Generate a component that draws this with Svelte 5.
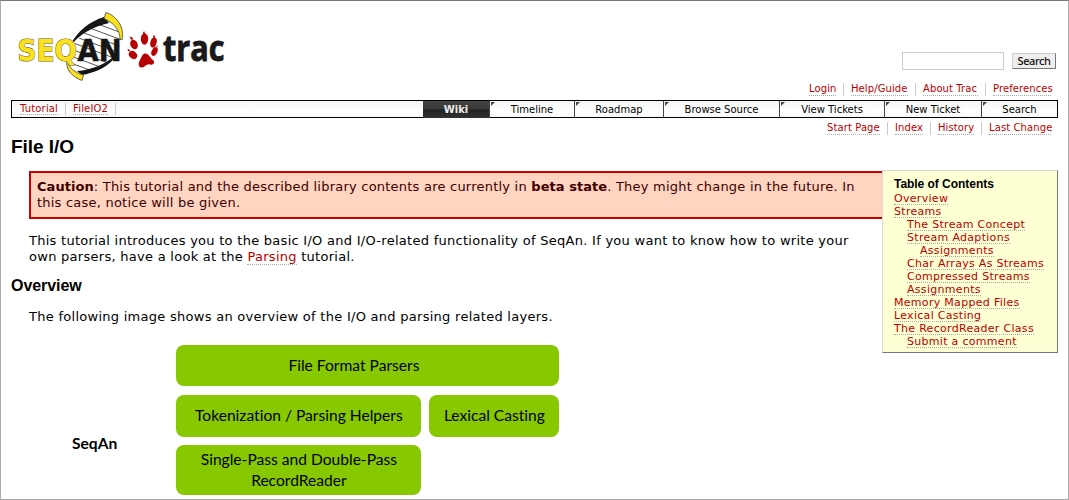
<script>
  const metanav = [['Login', 27], ['Help/Guide', 57], ['About Trac', 55], ['Preferences', 58]];
  const ctxtnav = [['Start Page', 53], ['Index', 28], ['History', 36], ['Last Change', 62]];
  const tabs = ['Wiki', 'Timeline', 'Roadmap', 'Browse Source', 'View Tickets', 'New Ticket', 'Search'];
  const toc = [
    ['Overview', 0],
    ['Streams', 0],
    ['The Stream Concept', 1],
    ['Stream Adaptions', 1],
    ['Assignments', 2],
    ['Char Arrays As Streams', 1],
    ['Compressed Streams', 1],
    ['Assignments', 1],
    ['Memory Mapped Files', 0],
    ['Lexical Casting', 0],
    ['The RecordReader Class', 0],
    ['Submit a comment', 1]
  ];
</script>

<div class="page">
  <header>
    <svg class="logo" width="240" height="84" viewBox="0 0 240 84" role="img" aria-label="SeqAn trac">
      <defs>
        <clipPath id="helix"><path d="M107 20C90 25 77 38 68 54L67 62C71 70 77 72 83 72C100 70 115 62 120 45C123 35 116 25 107 20Z" /></clipPath>
      </defs>
      <g clip-path="url(#helix)" stroke="#444" stroke-width=".9">
        <path d="M60 3L130 29M60 10L130 36M60 17L130 43M60 24L130 50M60 31L130 57M60 38L130 64M60 45L130 71M60 52L130 78M60 59L130 85" fill="none" />
      </g>
      <path d="M104 17C88 22 77 32 71 44L74 42C80 35 91 27 109 23Z" fill="#161616" />
      <path d="M77 71C92 70 106 64 117 54L112 61C104 69 93 73 82 75Z" fill="#161616" />
      <path d="M106 12.500C117 16 125 28 122 40L120 39C120 30 114 23 104 18.500Z" fill="#fbe11b" stroke="#444" stroke-width=".8" />
      <path d="M67 60C69 68 75 73 83.500 75L82 80.500C72 77 65 69 67 60Z" fill="#fbe11b" stroke="#444" stroke-width=".8" />
      <text x="17.500" y="61" class="seq" textLength="59.500" lengthAdjust="spacingAndGlyphs">SEQ</text>
      <text x="77.500" y="61" class="an" textLength="44" lengthAdjust="spacingAndGlyphs">AN</text>
      <g fill="#b80000">
        <path d="M146 53.500C149.500 54.500 150 58 153 60C155.500 62 153.500 65.500 150 64.500C146 63.500 145 68 141 67.500C137.500 66.500 138.500 62 140.500 59C142 56 143 53 146 53.500Z" />
        <ellipse cx="134" cy="44.500" rx="3.600" ry="4.900" transform="rotate(-25 134 44.500)" />
        <ellipse cx="144.500" cy="39" rx="3.700" ry="5.800" />
        <ellipse cx="153.500" cy="42.500" rx="3.200" ry="5.200" transform="rotate(15 153.500 42.500)" />
        <ellipse cx="133" cy="55" rx="3.600" ry="4.500" transform="rotate(-50 133 55)" />
        <ellipse cx="154.500" cy="51.500" rx="2.800" ry="4.600" transform="rotate(25 154.500 51.500)" />
        <path d="M129.500 36.500l3 1 .5 2.500-2-.5zM143 32l1.500-.5.500 3-1.500 0zM153 36l1.500-1 .5 3-1.500.5zM127.500 49l2 .5.500 2-2-.5zM156 46l1.500-.5 0 2z" />
      </g>
      <text x="163" y="61" class="trac" textLength="61.500" lengthAdjust="spacingAndGlyphs">trac</text>
    </svg>
    <form class="search"><input type="text" aria-label="Search" /><button type="button">Search</button></form>
  </header>

  <ul class="nav meta">
    {#each metanav as [label, w]}<li><a href="#top" style="width:{w}px">{label}</a></li>{/each}
  </ul>

  <nav class="mainnav">
    <div class="path"><a href="#top">Tutorial</a><a href="#top">FileIO2</a></div>
    {#each tabs as tab, i}<span class="tab" class:active={i === 0}>{tab}</span>{/each}
  </nav>

  <ul class="nav ctxt">
    {#each ctxtnav as [label, w]}<li><a href="#top" style="width:{w}px">{label}</a></li>{/each}
  </ul>

  <main>
    <aside class="toc">
      <h4>Table of Contents</h4>
      {#each toc as [label, depth]}<div style="padding-left:{depth * 13}px"><a href="#top">{label}</a></div>{/each}
    </aside>
    <h1>File I/O</h1>
    <div class="caution"><b>Caution</b>: This tutorial and the described library contents are currently in <b>beta state</b>. They might change in the future. In<br />this case, notice will be given.</div>
    <p>This tutorial introduces you to the basic I/O and I/O-related functionality of SeqAn. If you want to know how to write your<br />own parsers, have a look at the <a href="#top">Parsing</a> tutorial.</p>
    <h2>Overview</h2>
    <p>The following image shows an overview of the I/O and parsing related layers.</p>
    <div class="diagram">
      <strong>SeqAn</strong>
      <div class="layers">
        <div class="box wide">File Format Parsers</div>
        <div class="box">Tokenization / Parsing Helpers</div>
        <div class="box">Lexical Casting</div>
        <div class="box">Single-Pass and Double-Pass<br />RecordReader</div>
      </div>
    </div>
  </main>
</div>

<style>
  :global(body) { background: #fff; overflow: hidden; }
  * { box-sizing: border-box; }
  .page {
    width: 1069px; height: 500px; overflow: hidden; padding: 0 10px;
    border: 1px solid #a9a9a9; border-top-color: #777;
    font: 13px/16px "DejaVu Sans", Verdana, sans-serif; color: #000;
  }
  a { color: #b00; text-decoration: none; border-bottom: 1px dotted #aaa; }
  header { display: flex; justify-content: space-between; height: 79px; }
  .logo { display: block; margin: -1px 0 0 -11px; flex: none; overflow: visible; }
  .seq, .an { font: bold 29.500px "DejaVu Sans", sans-serif; }
  .seq { fill: #fbe11b; stroke: #6b6430; stroke-width: 1.1px; paint-order: stroke; }
  .an { fill: #161616; stroke: #161616; stroke-width: .6px; }
  .trac { font: bold 35.500px "Open Sans", sans-serif; fill: #1a1a1a; stroke: #1a1a1a; stroke-width: .9px; }
  .search { display: flex; gap: 8px; margin: 51px 2px 0 0; align-items: flex-start; }
  input { width: 102px; height: 18px; border: 1px solid #ccc; padding: 0; margin: 0; }
  button {
    width: 44px; height: 16px; margin-top: 1px; padding: 0; background: #eee; color: #111;
    border: 1px solid #ccc; border-right-color: #777; border-bottom-color: #777;
    font: 500 11px/14px "Noto Sans", sans-serif; letter-spacing: -.4px;
  }
  .nav { display: flex; justify-content: flex-end; list-style: none; margin: 0; padding: 0 7px 0 0; font-size: 10px; line-height: 12px; letter-spacing: .1px; }
  .meta { height: 20px; padding-top: 3px; }
  .ctxt { height: 17px; padding-top: 4px; }
  .nav li { height: 13px; }
  .nav li + li { border-left: 1px solid #ccc; margin-left: 7px; padding-left: 7px; }
  .nav a { display: block; height: 13px; white-space: nowrap; }
  .mainnav {
    display: grid; grid-template-columns: 411px 67px 85px 89px 116px 105px 97px 75px;
    height: 18px; border: 1px solid #000; background: linear-gradient(#f4f4f4, #fff 60%, #f8f8f8);
    font-size: 10px; line-height: 17px;
  }
  .path { display: flex; padding: 1px 0 0 8px; letter-spacing: .16px; }
  .path a { height: 13px; line-height: 13px; margin-right: 15px; position: relative; }
  .path a::after { content: ""; position: absolute; right: -8px; top: 1px; height: 12px; border-right: 1px solid #ccc; }
  .tab { position: relative; text-align: center; border-right: 1px solid #444; white-space: nowrap; }
  .tab:last-child { border-right: 0; }
  .tab:not(.active)::before { content: ""; position: absolute; left: 1px; top: 1px; border: 2px solid #444; border-right-color: transparent; border-bottom-color: transparent; }
  .active { background: linear-gradient(#444, #383838 45%, #222 55%, #333); color: #eee; font-weight: bold; }
  main { position: relative; }
  h1, h2, h4 { font-family: "Liberation Sans", Arial, sans-serif; font-weight: bold; margin: 0; }
  h1 { font-size: 19px; line-height: 24px; letter-spacing: -.05px; }
  h2 { font-size: 16px; line-height: 18px; letter-spacing: -.05px; margin-top: 12px; }
  h4 { font-size: 12px; line-height: 14px; height: 15px; letter-spacing: -.04px; }
  .caution {
    margin: 12px 0 0 18px; height: 48px; padding: 6px; border: 2px solid #d00000; background: #ffd4c0; color: #400000;
    white-space: nowrap; letter-spacing: .225px;
  }
  b { letter-spacing: .05px; }
  p { margin: 14px 0 0 18px; white-space: nowrap; letter-spacing: .275px; }
  .toc {
    position: absolute; right: 0; top: 35px; width: 176px; height: 183px; padding: 6px 0 0 11px;
    background: #ffffd4; border: 1px solid #d7d7d7; border-right-color: #777; border-bottom-color: #777;
    font-size: 11px; line-height: 14px; white-space: nowrap; letter-spacing: .3px;
  }
  .toc div { height: 13px; }
  .toc a { display: inline-block; height: 13px; line-height: 13px; vertical-align: top; }
  .diagram { display: grid; grid-template-columns: 147.400px 383px; margin: 20px 0 0 18px; font: 15.600px/21px Lato, Carlito, sans-serif; font-variant-ligatures: none; }
  .diagram strong { padding: 88px 0 0 43px; }
  .layers { display: grid; grid-template-columns: 245px 130px; grid-template-rows: 41px 42px 50px; gap: 8.500px 8px; }
  .box { background: #88c800; border-radius: 8px; display: flex; align-items: center; justify-content: center; text-align: center; white-space: nowrap; padding-bottom: 1px; }
  .wide { grid-column: span 2; padding-right: 28px; }
</style>
